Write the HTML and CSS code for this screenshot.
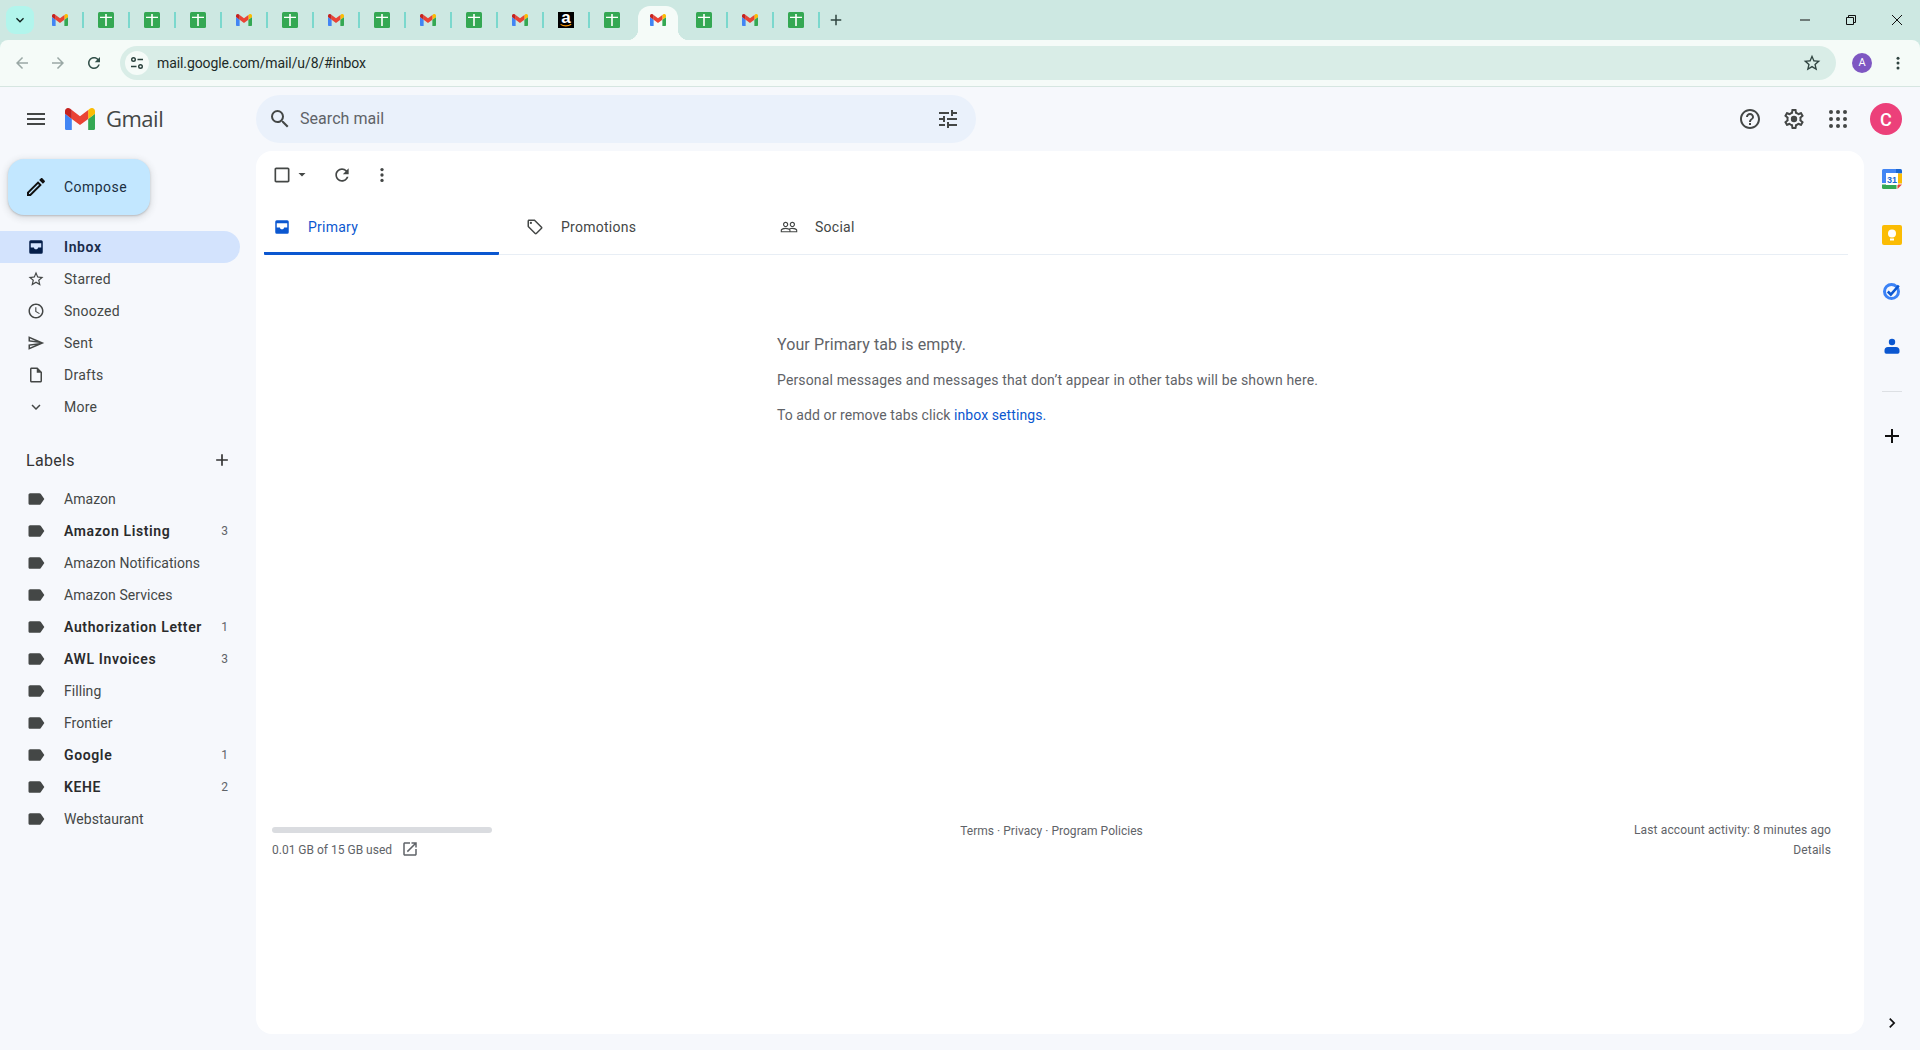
FILE: index.html
```html
<!DOCTYPE html>
<html lang="en">
<head>
<meta charset="utf-8">
<title>Inbox - Gmail</title>
<link rel="stylesheet" href="styles.css">
</head>
<body>
<svg class="sprite" width="0" height="0" aria-hidden="true">
  <symbol id="i-m" viewBox="52 42 88 66">
    <path fill="#4285f4" d="M58 108h14V74L52 59v43c0 3.32 2.69 6 6 6"/>
    <path fill="#34a853" d="M120 108h14c3.32 0 6-2.69 6-6V59l-20 15"/>
    <path fill="#fbbc04" d="M120 48v26l20-15v-8c0-7.42-8.47-11.65-14.4-7.2"/>
    <path fill="#ea4335" d="M72 74V48l24 18 24-18v26L96 92"/>
    <path fill="#c5221f" d="M52 51v8l20 15V48l-5.6-4.2c-5.94-4.45-14.4-.22-14.4 7.2"/>
  </symbol>
  <symbol id="i-sheet" viewBox="0 0 16 16">
    <rect width="16" height="16" rx="1.5" fill="#34a853"/>
    <path fill="#fff" d="M7.2 2h1.600v2.700H14v1.400H8.800V14H7.200V6.100H2V4.700h5.200z"/>
  </symbol>
  <symbol id="i-label" viewBox="0 0 24 24"><path d="M17.63 5.84C17.27 5.33 16.67 5 16 5L5 5.01C3.9 5.01 3 5.9 3 7v10c0 1.1.9 1.99 2 1.99L16 19c.67 0 1.27-.33 1.63-.84L22 12l-4.37-6.16z"/></symbol>
  <symbol id="i-add" viewBox="0 0 24 24"><path d="M19 13h-6v6h-2v-6H5v-2h6V5h2v6h6v2z"/></symbol>
  <symbol id="i-star" viewBox="0 0 24 24"><path d="M22 9.24l-7.19-.62L12 2 9.19 8.63 2 9.24l5.46 4.73L5.82 21 12 17.27 18.18 21l-1.63-7.03L22 9.24zM12 15.4l-3.76 2.27 1-4.28-3.32-2.88 4.38-.38L12 6.1l1.71 4.04 4.38.38-3.32 2.88 1 4.28L12 15.4z"/></symbol>
  <symbol id="i-refresh" viewBox="0 0 24 24"><path d="M17.65 6.35C16.2 4.9 14.21 4 12 4c-4.42 0-7.99 3.58-7.99 8s3.57 8 7.99 8c3.73 0 6.84-2.55 7.73-6h-2.08c-.82 2.33-3.04 4-5.65 4-3.31 0-6-2.69-6-6s2.69-6 6-6c1.66 0 3.14.69 4.22 1.78L13 11h7V4l-2.35 2.35z"/></symbol>
  <symbol id="i-vert" viewBox="0 0 24 24"><circle cx="12" cy="5.5" r="2"/><circle cx="12" cy="12" r="2"/><circle cx="12" cy="18.5" r="2"/></symbol>
  <symbol id="i-inbox" viewBox="0 0 24 24"><path fill-rule="evenodd" d="M5 3h14a2 2 0 0 1 2 2v14a2 2 0 0 1-2 2H5a2 2 0 0 1-2-2V5a2 2 0 0 1 2-2zm0 4v5.500h4.200c.3 1.600 1.400 2.600 2.800 2.600s2.500-1 2.800-2.600H19V7z"/></symbol>
</svg>

<header class="chrome">
  <div class="strip">
    <button class="tab-search"><svg class="ic16" viewBox="0 0 24 24"><path d="M16.59 8.59L12 13.17 7.41 8.59 6 10l6 6 6-6z"/></svg></button>
    <div class="tab"><svg class="fav m"><use href="#i-m"/></svg></div><i class="sep"></i>
    <div class="tab"><svg class="fav"><use href="#i-sheet"/></svg></div><i class="sep"></i>
    <div class="tab"><svg class="fav"><use href="#i-sheet"/></svg></div><i class="sep"></i>
    <div class="tab"><svg class="fav"><use href="#i-sheet"/></svg></div><i class="sep"></i>
    <div class="tab"><svg class="fav m"><use href="#i-m"/></svg></div><i class="sep"></i>
    <div class="tab"><svg class="fav"><use href="#i-sheet"/></svg></div><i class="sep"></i>
    <div class="tab"><svg class="fav m"><use href="#i-m"/></svg></div><i class="sep"></i>
    <div class="tab"><svg class="fav"><use href="#i-sheet"/></svg></div><i class="sep"></i>
    <div class="tab"><svg class="fav m"><use href="#i-m"/></svg></div><i class="sep"></i>
    <div class="tab"><svg class="fav"><use href="#i-sheet"/></svg></div><i class="sep"></i>
    <div class="tab"><svg class="fav m"><use href="#i-m"/></svg></div><i class="sep"></i>
    <div class="tab"><svg class="fav amazon" viewBox="0 0 16 16"><rect width="16" height="16" fill="#000"/><text x="8" y="10.800" class="amz">a</text><path d="M2.600 12.400c3 2 7.600 2 10.600-.2" fill="none" stroke="#f90" stroke-width="1.100"/></svg></div><i class="sep"></i>
    <div class="tab"><svg class="fav"><use href="#i-sheet"/></svg></div><i class="sep hidden"></i>
    <div class="tab active"><svg class="fav m"><use href="#i-m"/></svg></div><i class="sep hidden"></i>
    <div class="tab"><svg class="fav"><use href="#i-sheet"/></svg></div><i class="sep"></i>
    <div class="tab"><svg class="fav m"><use href="#i-m"/></svg></div><i class="sep"></i>
    <div class="tab"><svg class="fav"><use href="#i-sheet"/></svg></div><i class="sep"></i>
    <div class="new-tab"><svg class="ic18 dark"><use href="#i-add"/></svg></div>
    <div class="win">
      <div class="win-btn"><svg width="12" height="12" viewBox="0 0 12 12"><path d="M1 6h10" stroke="#111" fill="none"/></svg></div>
      <div class="win-btn"><svg width="12" height="12" viewBox="0 0 12 12"><path d="M1.500 3.500h7v7h-7zM3.500 3.500V1.500h7v7h-2" stroke="#111" fill="none"/></svg></div>
      <div class="win-btn"><svg width="12" height="12" viewBox="0 0 12 12"><path d="M1 1l10 10M11 1L1 11" stroke="#111" fill="none"/></svg></div>
    </div>
  </div>
  <div class="toolbar">
    <div class="nav-btn faded"><svg class="ic18" viewBox="0 0 24 24"><path d="M20 11H7.830l5.590-5.590L12 4l-8 8 8 8 1.410-1.410L7.830 13H20v-2z"/></svg></div>
    <div class="nav-btn faded"><svg class="ic18" viewBox="0 0 24 24"><path d="M12 4l-1.410 1.410L16.170 11H4v2h12.170l-5.580 5.590L12 20l8-8z"/></svg></div>
    <div class="nav-btn"><svg class="ic18"><use href="#i-refresh"/></svg></div>
    <div class="omnibox">
      <span class="site-info"><svg width="16" height="16" viewBox="0 0 16 16"><circle cx="4.500" cy="4.500" r="1.800" fill="none" stroke="#29403b" stroke-width="1.400"/><path d="M8.500 4.500H14M2 11.500h5.500" stroke="#29403b" stroke-width="1.500"/><circle cx="11.500" cy="11.500" r="1.800" fill="none" stroke="#29403b" stroke-width="1.400"/></svg></span>
      <span class="url">mail.google.com/mail/u/8/#inbox</span>
      <svg class="ic20 dark bookmark"><use href="#i-star"/></svg>
    </div>
    <div class="profile">A</div>
    <div class="chrome-menu"><svg class="ic18 dark"><use href="#i-vert"/></svg></div>
  </div>
</header>

<div class="app">
  <div class="brand">
    <button class="icon-btn"><svg class="ic24 grey" viewBox="0 0 24 24"><path d="M3 18h18v-2H3v2zm0-5h18v-2H3v2zm0-7v2h18V6H3z"/></svg></button>
    <svg class="gm-logo"><use href="#i-m"/></svg>
    <span class="gm-word">Gmail</span>
  </div>
  <div class="topbar">
    <div class="search">
      <svg class="ic24 grey" viewBox="0 0 24 24"><path d="M15.500 14h-.790l-.280-.270A6.471 6.471 0 0 0 16 9.500 6.500 6.500 0 1 0 9.500 16c1.610 0 3.090-.590 4.230-1.570l.270.280v.790l5 4.990L20.490 19l-4.990-5zm-6 0C7.010 14 5 11.990 5 9.500S7.010 5 9.500 5 14 7.010 14 9.500 11.990 14 9.500 14z"/></svg>
      <span class="search-text">Search mail</span>
      <svg class="ic24 grey" viewBox="0 0 24 24"><path d="M3 17v2h6v-2H3zM3 5v2h10V5H3zm10 16v-2h8v-2h-8v-2h-2v6h2zM7 9v2H3v2h4v2h2V9H7zm14 4v-2H11v2h10zm-6-4h2V7h4V5h-4V3h-2v6z"/></svg>
    </div>
    <div class="top-actions">
      <div class="top-btn"><svg class="ic24 grey" viewBox="0 0 24 24"><path d="M11 18h2v-2h-2v2zm1-16C6.480 2 2 6.480 2 12s4.480 10 10 10 10-4.480 10-10S17.520 2 12 2zm0 18c-4.410 0-8-3.590-8-8s3.590-8 8-8 8 3.590 8 8-3.590 8-8 8zm0-14c-2.210 0-4 1.790-4 4h2c0-1.100.9-2 2-2s2 .9 2 2c0 2-3 1.750-3 5h2c0-2.250 3-2.500 3-5 0-2.210-1.790-4-4-4z"/></svg></div>
      <div class="top-btn"><svg class="ic24 grey" viewBox="0 0 24 24"><path d="M19.430 12.980c.04-.32.07-.64.07-.98 0-.34-.03-.66-.07-.98l2.110-1.650c.19-.15.24-.42.12-.64l-2-3.460c-.09-.16-.26-.25-.44-.25-.06 0-.12.01-.17.03l-2.490 1c-.52-.4-1.080-.73-1.690-.98l-.38-2.650C14.460 2.180 14.250 2 14 2h-4c-.25 0-.46.18-.49.42l-.38 2.650c-.61.25-1.170.59-1.690.98l-2.490-1c-.06-.02-.12-.03-.18-.03-.17 0-.34.09-.43.25l-2 3.460c-.13.22-.07.49.12.64l2.110 1.650c-.04.32-.07.65-.07.98 0 .33.03.66.07.98l-2.110 1.650c-.19.15-.24.42-.12.64l2 3.460c.09.16.26.25.44.25.06 0 .12-.01.17-.03l2.490-1c.52.4 1.080.73 1.690.98l.38 2.650c.03.24.24.42.49.42h4c.25 0 .46-.18.49-.42l.38-2.650c.61-.25 1.170-.59 1.690-.98l2.490 1c.06.02.12.03.18.03.17 0 .34-.09.43-.25l2-3.460c.12-.22.07-.49-.12-.64l-2.110-1.650zm-1.980-1.710c.04.31.05.52.05.73 0 .21-.02.43-.05.73l-.14 1.130.89.7 1.080.84-.7 1.210-1.270-.51-1.040-.42-.9.68c-.43.32-.84.56-1.250.73l-1.060.43-.16 1.130-.2 1.350h-1.400l-.19-1.350-.16-1.130-1.060-.43c-.43-.18-.83-.41-1.230-.71l-.91-.7-1.060.43-1.270.51-.7-1.210 1.080-.84.89-.7-.14-1.130c-.03-.31-.05-.54-.05-.74s.02-.43.05-.73l.14-1.130-.89-.7-1.080-.84.7-1.210 1.270.51 1.040.42.9-.68c.43-.32.84-.56 1.250-.73l1.060-.43.16-1.130.2-1.350h1.390l.19 1.350.16 1.130 1.060.43c.43.18.83.41 1.230.71l.91.7 1.060-.43 1.270-.51.7 1.210-1.070.85-.89.7.14 1.130z"/><circle cx="12" cy="12" r="3.200"/></svg></div>
      <div class="top-btn"><svg class="ic24 grey" viewBox="0 0 24 24"><circle cx="5" cy="5" r="2"/><circle cx="12" cy="5" r="2"/><circle cx="19" cy="5" r="2"/><circle cx="5" cy="12" r="2"/><circle cx="12" cy="12" r="2"/><circle cx="19" cy="12" r="2"/><circle cx="5" cy="19" r="2"/><circle cx="12" cy="19" r="2"/><circle cx="19" cy="19" r="2"/></svg></div>
      <div class="account">C</div>
    </div>
  </div>

  <nav class="sidebar">
    <button class="compose">
      <svg class="ic24 black" viewBox="0 0 24 24"><path d="M14.060 9.020l.92.92L5.920 19H5v-.92l9.060-9.060M17.660 3c-.25 0-.51.1-.7.29l-1.830 1.830 3.750 3.750 1.830-1.830c.39-.39.39-1.020 0-1.410l-2.340-2.340c-.2-.2-.45-.29-.71-.29zm-3.600 3.190L3 17.250V21h3.750L17.810 9.940l-3.750-3.750z"/></svg>
      <span>Compose</span>
    </button>
    <ul class="menu">
      <li class="row selected"><svg class="ic20"><use href="#i-inbox"/></svg><span>Inbox</span></li>
      <li class="row"><svg class="ic20"><use href="#i-star"/></svg><span>Starred</span></li>
      <li class="row"><svg class="ic20" viewBox="0 0 24 24"><path d="M11.990 2C6.470 2 2 6.480 2 12s4.470 10 9.990 10C17.520 22 22 17.520 22 12S17.520 2 11.990 2zM12 20c-4.420 0-8-3.580-8-8s3.580-8 8-8 8 3.580 8 8-3.580 8-8 8zm.5-13H11v6l5.250 3.150.75-1.230-4.500-2.670z"/></svg><span>Snoozed</span></li>
      <li class="row"><svg class="ic20" viewBox="0 0 24 24"><path d="M4.010 6.030l7.510 3.220-7.520-1 .01-2.220m7.500 8.720L4 17.970v-2.220l7.510-1M2.010 3L2 10l15 2-15 2 .01 7L23 12 2.010 3z"/></svg><span>Sent</span></li>
      <li class="row"><svg class="ic20" viewBox="0 0 24 24"><path d="M14 2H6c-1.100 0-2 .9-2 2v16c0 1.100.9 2 2 2h12c1.100 0 2-.9 2-2V8l-6-6zm4 18H6V4h7v5h5z"/></svg><span>Drafts</span></li>
      <li class="row"><svg class="ic20" viewBox="0 0 24 24"><path d="M16.590 8.590L12 13.170 7.410 8.590 6 10l6 6 6-6z"/></svg><span>More</span></li>
    </ul>
    <div class="labels-head"><span>Labels</span><svg class="ic20"><use href="#i-add"/></svg></div>
    <ul class="menu">
      <li class="row label"><svg class="ic20"><use href="#i-label"/></svg><span>Amazon</span></li>
      <li class="row label unread"><svg class="ic20"><use href="#i-label"/></svg><span>Amazon Listing</span><em>3</em></li>
      <li class="row label"><svg class="ic20"><use href="#i-label"/></svg><span>Amazon Notifications</span></li>
      <li class="row label"><svg class="ic20"><use href="#i-label"/></svg><span>Amazon Services</span></li>
      <li class="row label unread"><svg class="ic20"><use href="#i-label"/></svg><span>Authorization Letter</span><em>1</em></li>
      <li class="row label unread"><svg class="ic20"><use href="#i-label"/></svg><span>AWL Invoices</span><em>3</em></li>
      <li class="row label"><svg class="ic20"><use href="#i-label"/></svg><span>Filling</span></li>
      <li class="row label"><svg class="ic20"><use href="#i-label"/></svg><span>Frontier</span></li>
      <li class="row label unread"><svg class="ic20"><use href="#i-label"/></svg><span>Google</span><em>1</em></li>
      <li class="row label unread"><svg class="ic20"><use href="#i-label"/></svg><span>KEHE</span><em>2</em></li>
      <li class="row label"><svg class="ic20"><use href="#i-label"/></svg><span>Webstaurant</span></li>
    </ul>
  </nav>

  <main class="card">
    <div class="actions">
      <svg class="ic20 grey" viewBox="0 0 24 24"><path d="M19 5v14H5V5h14m0-2H5c-1.100 0-2 .9-2 2v14c0 1.100.9 2 2 2h14c1.100 0 2-.9 2-2V5c0-1.100-.9-2-2-2z"/></svg>
      <svg class="caret" width="10" height="10" viewBox="0 0 10 10"><path d="M1.500 3h7L5 6.500z"/></svg>
      <svg class="ic20 grey refresh"><use href="#i-refresh"/></svg>
      <svg class="ic20 grey dots"><use href="#i-vert"/></svg>
    </div>
    <div class="tabs">
      <div class="cat first"><svg class="ic20 blue"><use href="#i-inbox"/></svg><span>Primary</span></div>
      <div class="cat"><svg class="ic20 grey" viewBox="0 0 24 24"><path d="M21.410 11.580l-9-9C12.050 2.220 11.550 2 11 2H4c-1.100 0-2 .9-2 2v7c0 .55.22 1.050.59 1.420l9 9c.36.36.86.58 1.410.58s1.050-.22 1.410-.59l7-7c.37-.36.59-.86.59-1.410s-.23-1.060-.59-1.420zM13 20.010L4 11V4h7v-.01l9 9-7 7.020z"/><circle cx="6.500" cy="6.500" r="1.500"/></svg><span>Promotions</span></div>
      <div class="cat"><svg class="ic20 grey" viewBox="0 0 24 24"><path d="M16.500 13c-1.200 0-3.070.34-4.500 1-1.430-.67-3.300-1-4.500-1C5.330 13 1 14.080 1 16.250V19h22v-2.750c0-2.170-4.330-3.250-6.500-3.250zm-4 4.500h-10v-1.250c0-.54 2.560-1.750 5-1.750s5 1.210 5 1.750v1.250zm9 0H14v-1.250c0-.46-.2-.86-.52-1.220.88-.3 1.960-.53 3.020-.53 2.440 0 5 1.210 5 1.750v1.250zM7.500 12c1.930 0 3.500-1.570 3.500-3.500S9.430 5 7.500 5 4 6.570 4 8.500 5.570 12 7.500 12zm0-5.500c1.100 0 2 .9 2 2s-.9 2-2 2-2-.9-2-2 .9-2 2-2zm9 5.500c1.930 0 3.500-1.570 3.500-3.500S18.430 5 16.500 5 13 6.570 13 8.500s1.570 3.500 3.500 3.500zm0-5.500c1.100 0 2 .9 2 2s-.9 2-2 2-2-.9-2-2 .9-2 2-2z"/></svg><span>Social</span></div>
    </div>
    <section class="empty">
      <h2>Your Primary tab is empty.</h2>
      <p>Personal messages and messages that don’t appear in other tabs will be shown here.</p>
      <p class="tight">To add or remove tabs click <a href="#">inbox settings.</a></p>
    </section>
    <footer class="foot">
      <div class="storage">
        <div class="bar"></div>
        <div class="used"><span>0.01 GB of 15 GB used</span><svg class="ic18 grey" viewBox="0 0 24 24"><path d="M19 19H5V5h7V3H5c-1.110 0-2 .9-2 2v14c0 1.100.89 2 2 2h14c1.100 0 2-.9 2-2v-7h-2v7zM14 3v2h3.590l-9.830 9.830 1.410 1.410L19 6.410V10h2V3h-7z"/></svg></div>
      </div>
      <div class="policies">Terms · Privacy · Program Policies</div>
      <div class="activity"><div>Last account activity: 8 minutes ago</div><div>Details</div></div>
    </footer>
  </main>

  <aside class="rail">
    <div class="rail-apps">
      <div class="rail-btn"><svg width="20" height="20" viewBox="0 0 20 20"><path fill="#4285f4" d="M1.500 0H14v4.500H4.500V14H0V1.500A1.500 1.500 0 0 1 1.500 0z"/><path fill="#1967d2" d="M14 0h4.500A1.500 1.500 0 0 1 20 1.500V4.500h-6z"/><path fill="#fbbc04" d="M15.500 4.500H20V14.500h-4.500z"/><path fill="#34a853" d="M4.500 15.500H14.500V20H1.500A1.500 1.500 0 0 1 0 18.500V15.500h4.500z"/><path fill="#ea4335" d="M15.500 15.500H20L15.500 20z"/><rect x="4" y="4" width="12" height="12" fill="#fff"/><text x="10" y="13.500" class="cal">31</text></svg></div>
      <div class="rail-btn"><svg width="20" height="20" viewBox="0 0 20 20"><rect width="20" height="20" rx="2" fill="#fbbc04"/><circle cx="10" cy="8.500" r="4" fill="#fff"/><rect x="8" y="13.500" width="4" height="2" fill="#fff"/></svg></div>
      <div class="rail-btn"><svg width="20" height="20" viewBox="0 0 20 20"><circle cx="9.500" cy="10.500" r="7" fill="none" stroke="#3b82f6" stroke-width="3"/><path d="M5.800 10.500l3 3 8-9" fill="none" stroke="#0b57d0" stroke-width="2.600"/></svg></div>
      <div class="rail-btn"><svg width="20" height="20" viewBox="0 0 20 20"><circle cx="10" cy="5" r="3.200" fill="#0b57d0"/><path d="M6 10h8a3.500 3.500 0 0 1 3.500 3.500V15a1.800 1.800 0 0 1-1.800 1.800H4.300A1.800 1.800 0 0 1 2.500 15v-1.500A3.500 3.500 0 0 1 6 10z" fill="#0b57d0"/></svg></div>
    </div>
    <hr class="rail-line">
    <div class="rail-btn"><svg class="ic24 black"><use href="#i-add"/></svg></div>
    <div class="rail-foot"><svg class="ic20 black" viewBox="0 0 24 24"><path d="M10 6L8.590 7.410 13.170 12l-4.580 4.590L10 18l6-6z"/></svg></div>
  </aside>
</div>
</body>
</html>
```

FILE: styles.css
```css
* { box-sizing: border-box; }
html, body { margin: 0; height: 100%; }
body {
  width: 1920px; height: 1050px; overflow: hidden;
  display: flex; flex-direction: column;
  background: #f6f8fc; color: #444746;
  font-family: Roboto, "Liberation Sans", sans-serif; font-size: 14px;
}
.sprite { display: block; width: 0; height: 0; overflow: hidden; }
svg { display: block; flex: none; fill: currentColor; }
ul { list-style: none; margin: 0; padding: 0; }
button { border: 0; background: none; padding: 0; font: inherit; color: inherit; }
.ic16 { width: 16px; height: 16px; }
.ic18 { width: 18px; height: 18px; }
.ic20 { width: 20px; height: 20px; }
.ic24 { width: 24px; height: 24px; }
.grey { color: #444746; }
.dark { color: #2f4440; }
.black { color: #111; }
.blue { color: #0b57d0; }

/* browser frame */
.chrome { flex: none; background: #cde8e2; }
.strip { height: 40px; display: flex; align-items: center; }
.tab-search {
  width: 28px; height: 28px; margin: 0 4px 0 6px; border-radius: 9px;
  background: #b2f5ec; color: #10201d; display: flex; align-items: center; justify-content: center;
}
.tab { width: 44px; height: 40px; display: flex; align-items: center; justify-content: center; position: relative; }
.tab.active {
  width: 40px; height: 34px; margin: 6px 2px 0; padding-bottom: 6px;
  background: #f5fbf8; border-radius: 12px 12px 0 0;
}
.tab.active::before, .tab.active::after {
  content: ""; position: absolute; bottom: 0; width: 11px; height: 11px;
}
.tab.active::before { left: -11px; background: radial-gradient(circle at 0 0, transparent 11px, #f5fbf8 11.500px); }
.tab.active::after { right: -11px; background: radial-gradient(circle at 100% 0, transparent 11px, #f5fbf8 11.500px); }
.fav { width: 16px; height: 16px; }
.fav.m { width: 16px; height: 12px; }
.fav.amazon { overflow: visible; }
.amz { font: 700 17px "Liberation Sans", sans-serif; fill: #fff; text-anchor: middle; }
.sep { width: 2px; height: 16px; background: #7bd8cd; flex: none; }
.sep.hidden { background: transparent; }
.new-tab { width: 32px; display: flex; justify-content: center; }
.win { margin-left: auto; display: flex; }
.win-btn { width: 46px; height: 40px; display: flex; align-items: center; justify-content: center; }

.toolbar {
  height: 47px; display: flex; align-items: center; padding: 0 0 1px 4px;
  background: #f5fbf8; border-radius: 8px 8px 0 0; border-bottom: 1px solid #d6e6e1;
}
.nav-btn { width: 36px; display: flex; justify-content: center; color: #33504a; }
.nav-btn.faded { color: #9aa8a5; }
.omnibox {
  width: 1716px; height: 34px; margin-left: 8px; border-radius: 17px; background: #d9ede7;
  display: flex; align-items: center; padding-left: 5px; padding-right: 14px;
}
.site-info { width: 24px; height: 24px; border-radius: 50%; background: #f5fbf8; display: flex; align-items: center; justify-content: center; }
.url { margin-left: 8px; flex: 1; color: #1d2a27; font-size: 14px; letter-spacing: -.1px; }
.profile {
  width: 20px; height: 20px; margin-left: 16px; border-radius: 50%; background: #7e57c2;
  color: #fff; font-size: 11px; display: flex; align-items: center; justify-content: center;
}
.chrome-menu { width: 36px; margin-left: 8px; display: flex; justify-content: center; }

/* gmail */
.app { flex: 1; min-height: 0; display: grid; grid-template-columns: 256px 1fr 56px; grid-template-rows: 64px 1fr; }
.brand { display: flex; align-items: center; padding-left: 24px; }
.icon-btn { width: 24px; height: 24px; }
.gm-logo { width: 30px; height: 22.500px; margin-left: 17px; }
.gm-word { margin: 0 0 2px 11px; font: 400 22px "Open Sans", sans-serif; letter-spacing: -.5px; color: #444746; }
.topbar { grid-column: 2 / 4; display: flex; align-items: center; justify-content: space-between; padding-right: 18px; }
.search {
  width: 720px; height: 48px; border-radius: 24px; background: #eaf1fb;
  display: flex; align-items: center; padding: 0 16px 0 12px;
}
.search-text { flex: 1; margin: 0 0 1px 8px; font-size: 16px; letter-spacing: .05px; color: #5f6368; }
.top-actions { display: flex; align-items: center; }
.top-btn { width: 44px; display: flex; justify-content: center; }
.account {
  width: 32px; height: 32px; margin-left: 10px; border-radius: 50%; background: #ec407a;
  color: #fff; font-size: 18px; font-weight: 500; display: flex; align-items: center; justify-content: center;
}

.sidebar { padding-top: 8px; }
.compose {
  width: 142px; height: 56px; margin: 0 0 16px 8px; border-radius: 16px; background: #c2e7ff;
  box-shadow: 0 1px 2px rgba(60,64,67,.25), 0 2px 6px 2px rgba(60,64,67,.12);
  display: flex; align-items: center; padding-left: 16px; gap: 16px; color: #1b2f42;
}
.compose span { letter-spacing: .45px; }
.row { height: 32px; width: 240px; display: flex; align-items: center; padding: 0 12px 0 27px; gap: 19px; border-radius: 0 16px 16px 0; }
.row svg { width: 18px; height: 18px; }
.row span { letter-spacing: .25px; }
.row.selected { background: #d3e3fd; color: #1a2b4a; font-weight: 600; }
.row.selected span { letter-spacing: .6px; }
.row.selected svg { color: #041e49; }
.labels-head {
  width: 240px; height: 40px; margin: 17px 0 3px; padding: 0 8px 0 26px;
  display: flex; align-items: center; justify-content: space-between; font-size: 16px; color: #333;
}
.labels-head span { letter-spacing: .3px; }
.label { padding-left: 26px; gap: 18px; }
.label svg { width: 20px; height: 20px; color: #444746; }
.label span { letter-spacing: .05px; }
.label.unread { color: #2a2b2c; font-weight: 600; }
.label.unread span { letter-spacing: .63px; }
.label em { margin-left: auto; font-style: normal; font-weight: 400; font-size: 12px; color: #5f6368; }

.card { background: #fff; border-radius: 16px; margin-bottom: 16px; display: flex; flex-direction: column; }
.actions { height: 48px; display: flex; align-items: center; padding-left: 16px; }
.actions .ic20 { width: 20px; height: 20px; }
.caret { margin-left: 5px; }
.refresh { margin-left: 25px; }
.dots { margin-left: 20px; }
.tabs { height: 56px; margin: 0 16px 0 8px; display: flex; border-bottom: 1px solid #e8eef5; }
.cat { width: 254px; padding-left: 27px; display: flex; align-items: center; gap: 17px; }
.cat svg { width: 18px; height: 18px; }
.cat span { letter-spacing: .25px; }
.cat.first { width: 235px; padding: 3px 0 0 9px; color: #0b57d0; border-bottom: 3px solid #0b57d0; height: 56px; border-radius: 0 0 1px 1px; }
.empty { margin: 77px 0 0 521px; height: 489px; color: #5f6368; }
.empty h2 { margin: 0 0 13px; font-size: 16px; font-weight: 400; line-height: 26px; letter-spacing: .1px; }
.empty p { margin: 0 0 17px; line-height: 18px; letter-spacing: .15px; }
.empty p.tight { letter-spacing: .08px; }
.empty a { color: #0b57d0; text-decoration: none; }
.foot { display: grid; grid-template-columns: 1fr auto 1fr; margin: 0 33px 0 16px; font-size: 12px; color: #5f6368; }
.bar { width: 220px; height: 6px; border-radius: 3px; background: #dadce0; margin-top: 6px; }
.used { display: flex; align-items: center; gap: 9px; margin-top: 7px; }
.used span { margin-top: 2px; }
.used svg { color: #5f6368; }
.policies { margin-top: 3px; letter-spacing: .03px; }
.activity { text-align: right; line-height: 20px; margin-top: -1px; letter-spacing: .14px; }

.rail { display: flex; flex-direction: column; align-items: center; padding: 0 0 17px; }
.rail-apps { display: flex; flex-direction: column; gap: 36px; padding-top: 18px; }
.rail-btn { width: 20px; height: 20px; display: flex; align-items: center; justify-content: center; }
.cal { font: 700 9px "Liberation Sans", sans-serif; fill: #1967d2; text-anchor: middle; }
.rail-line { width: 20px; border: 0; border-top: 1px solid #dde0e4; margin: 34px 0 34px; }
.rail-foot { margin-top: auto; }
```
